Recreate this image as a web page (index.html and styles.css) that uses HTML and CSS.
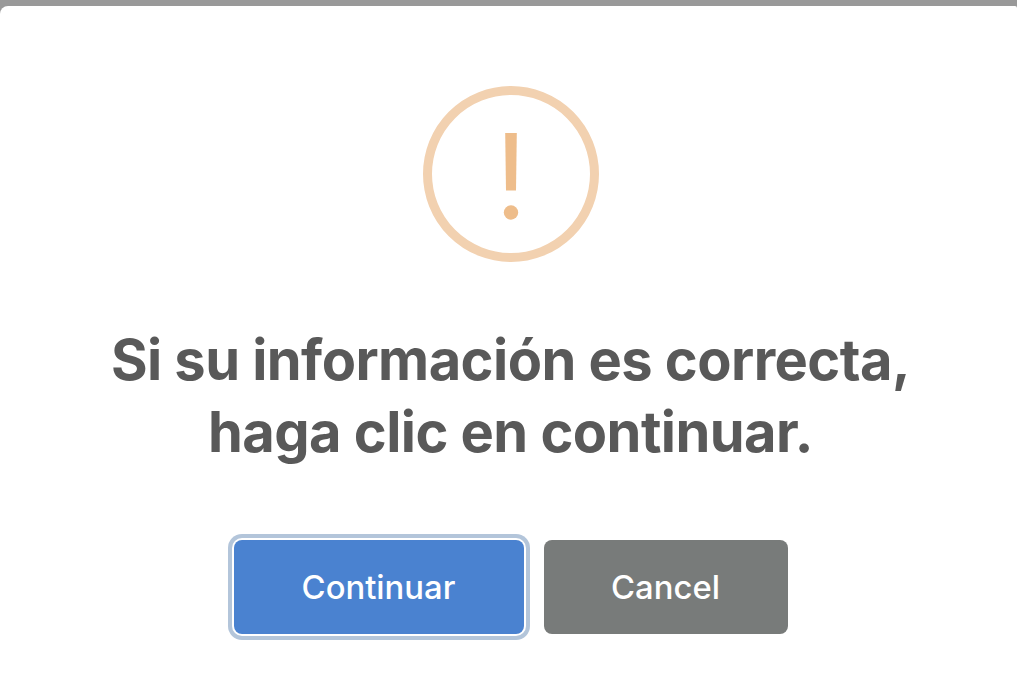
FILE: index.html
```html
<!DOCTYPE html>
<html lang="es">
<head>
<meta charset="utf-8">
<title>Confirmar</title>
<link rel="stylesheet" href="styles.css">
</head>
<body>
<main class="modal">
  <div class="warn-icon">
    <svg class="warn-mark" width="24" height="90" viewBox="0 0 24 90" aria-hidden="true">
      <path d="M6.2 0H17.8L17 57.500H7Z" fill="#eebd8b"/>
      <circle cx="12" cy="79.500" r="7.200" fill="#eebd8b"/>
    </svg>
  </div>
  <h1 class="title">Si su información es correcta,<br>haga clic en continuar.</h1>
  <div class="actions">
    <button class="btn btn-confirm" type="button">Continuar</button>
    <button class="btn btn-cancel" type="button">Cancel</button>
  </div>
</main>
</body>
</html>
```
FILE: styles.css
```css
* { box-sizing: border-box; }
html, body { margin: 0; height: 100%; }
body {
  background: #999999;
  padding-top: 6px;
  overflow: hidden;
  font-family: Inter, "Liberation Sans", sans-serif;
}
.modal {
  height: 674px;
  background: #ffffff;
  border-radius: 8px 2px 0 0;
  padding: 80px 0 0 4px;
  display: flex;
  flex-direction: column;
  align-items: center;
}
.warn-icon {
  width: 176px;
  height: 176px;
  border: 9px solid #f2d1b0;
  border-radius: 50%;
  display: flex;
  justify-content: center;
  padding-top: 38px;
}
.warn-mark { display: block; }
.title {
  margin: 62px 0 0;
  font-size: 56px;
  font-weight: 700;
  letter-spacing: -0.55px;
  line-height: 72px;
  color: #595959;
  text-align: center;
}
.actions {
  display: flex;
  gap: 20px;
  margin-top: 72px;
}
.btn {
  height: 94px;
  border: 0;
  border-radius: 8px;
  color: #ffffff;
  font-family: inherit;
  font-size: 32.800px;
  font-weight: 500;
}
.btn-confirm {
  width: 290px;
  background: #4a82d0;
  box-shadow: 0 0 0 2px #ffffff, 0 0 0 6px #b3c5da;
}
.btn-cancel {
  width: 244px;
  background: #787b7a;
}
```
